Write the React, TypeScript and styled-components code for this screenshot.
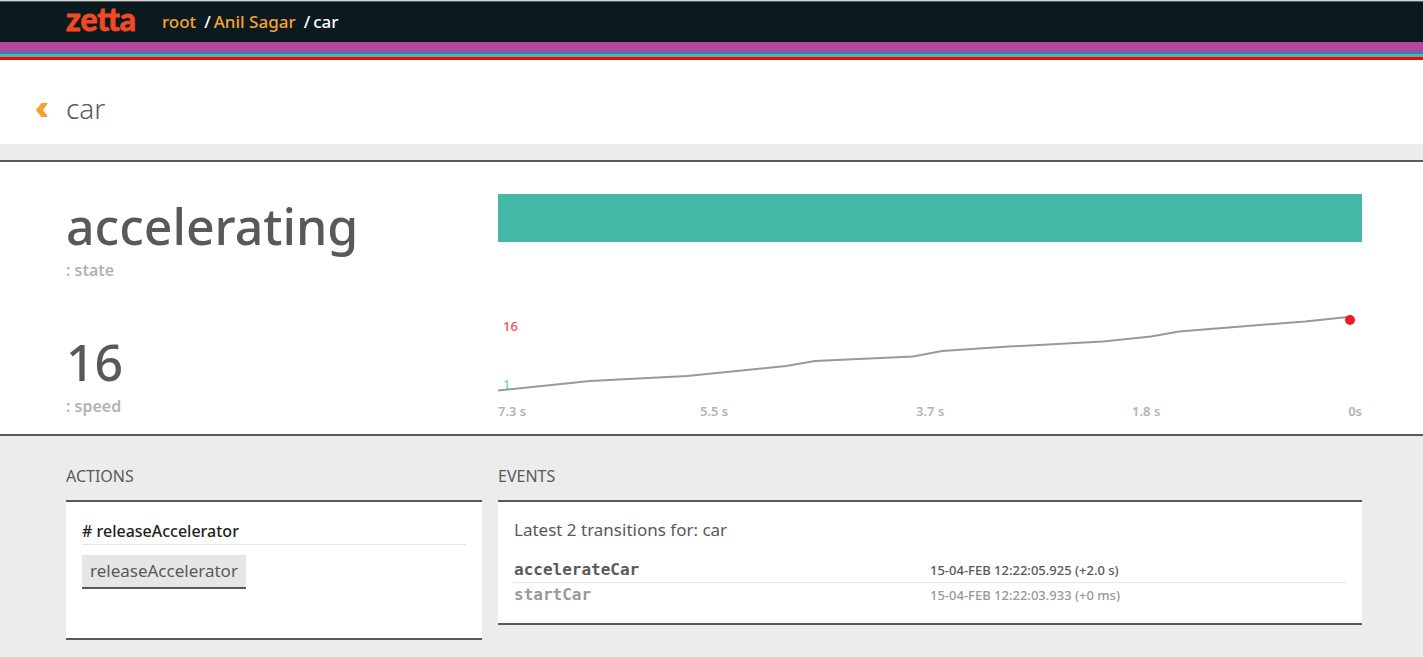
import React from "react";
import styled, { createGlobalStyle } from "styled-components";

const ink = "#58595b";
const muted = "#b3b3b3";
const orange = "#f9a033";
const teal = "#46b8a6";

const GlobalStyle = createGlobalStyle`
  * { box-sizing: border-box; }
  body {
    margin: 0;
    background: #ececec;
    color: ${ink};
    font-family: "Noto Sans", "Open Sans", sans-serif;
    font-size: 16px;
    line-height: 24px;
  }
  h1, h2, h3, p, ol { margin: 0; padding: 0; }
`;

const TopBar = styled.header`
  display: flex;
  align-items: center;
  height: 42px;
  padding: 0 61px 0 66px;
  background: #0b1a1f;
  border-top: 1px solid #d3d7d5;
  box-shadow: inset 0 1px 0 #59625f;
`;

const Logo = styled.a`
  width: 96px;
  padding-bottom: 6px;
  color: #f04923;
  font-family: Lato, sans-serif;
  font-size: 32px;
  font-weight: 700;
  line-height: 32px;
  text-decoration: none;
  -webkit-text-stroke: 1px #f04923;
`;

const Crumbs = styled.ol`
  display: flex;
  gap: 8px;
  list-style: none;
  color: #fff;
  font-size: 17px;
  font-weight: 500;
`;

const Crumb = styled.li`
  display: flex;
  gap: 3px;
`;

const CrumbLink = styled.a`
  color: ${orange};
  text-decoration: none;
`;

const Stripe = styled.div<{ $color: string; $size: number }>`
  height: ${(p) => p.$size}px;
  background: ${(p) => p.$color};
`;

const TitleBar = styled.div`
  display: flex;
  align-items: center;
  height: 84px;
  padding: 12px 61px 0 35px;
  background: #fff;
`;

const BackLink = styled.a`
  display: flex;
  width: 31px;
  padding-top: 3px;
`;

const Title = styled.h1`
  font-size: 28px;
  font-weight: 300;
  line-height: 40px;
`;

const Panel = styled.section`
  margin-top: 16px;
  padding: 0 61px 0 66px;
  background: #fff;
  border-top: 2px solid ${ink};
  border-bottom: 2px solid ${ink};
`;

const Columns = styled.div`
  display: grid;
  grid-template-columns: 1fr 2fr;
`;

const StatRow = styled(Columns)`
  min-height: 136px;
  padding-top: 16px;
`;

const Stat = styled.div`
  display: flex;
  flex-direction: column;
  padding-top: 16px;
`;

const StatValue = styled.div`
  font-size: 50px;
  font-weight: 500;
  line-height: 64px;
`;

const StatLabel = styled.div`
  color: ${muted};
  font-weight: 600;
`;

const StateBar = styled.div`
  height: 48px;
  margin-top: 16px;
  background: ${teal};
`;

const Chart = styled.svg`
  display: block;
  width: 100%;
  font-size: 13px;
  font-weight: 500;
`;

const Axis = styled.div`
  display: flex;
  justify-content: space-between;
  color: ${muted};
  font-size: 13px;
  font-weight: 600;
  line-height: 18px;
`;

const Tick = styled.span`
  flex: 1;
  &:first-child { flex: 0 0 202px; }
  &:last-child { flex: none; }
`;

const Lower = styled.main`
  padding: 28px 61px 16px 66px;
`;

const Column = styled.section<{ $gutter?: boolean }>`
  padding-right: ${(p) => (p.$gutter ? 16 : 0)}px;
`;

const Heading = styled.h2`
  margin-bottom: 12px;
  font-size: 16px;
  font-weight: 400;
`;

const Card = styled.div<{ $bottom: number }>`
  padding: 16px 16px ${(p) => p.$bottom}px;
  background: #fff;
  border-top: 2px solid ${ink};
  border-bottom: 2px solid ${ink};
`;

const ActionName = styled.h3`
  margin-bottom: 10px;
  padding-top: 1px;
  padding-bottom: 1px;
  border-bottom: 1px solid #e6e6e6;
  color: #231f20;
  font-size: 16px;
  font-weight: 500;
`;

const ActionButton = styled.button`
  display: block;
  height: 34px;
  padding: 0 8px;
  background: #e6e6e6;
  border: 0;
  border-bottom: 2px solid ${ink};
  color: ${ink};
  font: inherit;
  font-size: 17px;
`;

const Summary = styled.p`
  margin-bottom: 16px;
  font-size: 17px;
`;

const EventTable = styled.table`
  width: 100%;
  table-layout: fixed;
  border-collapse: collapse;
`;

const EventRow = styled.tr<{ $old?: boolean }>`
  color: ${(p) => (p.$old ? "#999" : ink)};
  & + & { border-top: 1px solid #e6e6e6; }
`;

const EventName = styled.th`
  padding: 0;
  font-family: "DejaVu Sans Mono", monospace;
  font-size: 16px;
  font-weight: 700;
  line-height: 24px;
  text-align: left;
`;

const EventTime = styled.td`
  padding: 0;
  font-size: 13px;
  font-weight: 500;
  line-height: 24px;
`;

const stripes = [
  { color: "#b8459c", size: 9 },
  { color: "#4b6fb8", size: 3 },
  { color: teal, size: 3 },
  { color: "#ff0000", size: 3 },
];

const ticks = ["7.3 s", "5.5 s", "3.7 s", "1.8 s", "0s"];

const events = [
  { name: "accelerateCar", time: "15-04-FEB 12:22:05.925 (+2.0 s)" },
  { name: "startCar", time: "15-04-FEB 12:22:03.933 (+0 ms)" },
];

export default function App() {
  return (
    <>
      <GlobalStyle />
      <TopBar>
        <Logo href="#">zetta</Logo>
        <Crumbs>
          <Crumb><CrumbLink href="#root">root</CrumbLink></Crumb>
          <Crumb><span>/</span><CrumbLink href="#server">Anil Sagar</CrumbLink></Crumb>
          <Crumb><span>/</span><span>car</span></Crumb>
        </Crumbs>
      </TopBar>
      {stripes.map((s) => (
        <Stripe key={s.color} $color={s.color} $size={s.size} />
      ))}
      <TitleBar>
        <BackLink href="#back" aria-label="Back">
          <svg width="13" height="16" viewBox="0 0 13 16" aria-hidden="true">
            <path d="M6.500 1H12.500V2L8 8L12.500 14V15H6.500L0.800 8Z" fill={orange} />
          </svg>
        </BackLink>
        <Title>car</Title>
      </TitleBar>

      <Panel>
        <StatRow>
          <Stat>
            <StatValue>accelerating</StatValue>
            <StatLabel>: state</StatLabel>
          </Stat>
          <StateBar />
        </StatRow>
        <StatRow>
          <Stat>
            <StatValue>16</StatValue>
            <StatLabel>: speed</StatLabel>
          </Stat>
          <div>
            <Chart viewBox="0 16 864 88" role="img" aria-label="Speed over time">
              <text x="5" y="33" fill="#f05054">16</text>
              <text x="5" y="91" fill="#6dcff6">1</text>
              <polyline
                fill="none"
                stroke="#999"
                strokeWidth="2"
                points="0,92.5 92,83 189,78 288,68 317,63 415,58.500 444,53 511,48.500 605,43.500 653,38.500 681,33.500 807,23.500 850,19"
              />
              <circle cx="852" cy="22" r="5" fill="#ed1c24" />
            </Chart>
            <Axis>
              {ticks.map((t) => <Tick key={t}>{t}</Tick>)}
            </Axis>
          </div>
        </StatRow>
      </Panel>

      <Lower>
        <Columns>
          <Column $gutter>
            <Heading>ACTIONS</Heading>
            <Card $bottom={49}>
              <ActionName># releaseAccelerator</ActionName>
              <ActionButton type="button">releaseAccelerator</ActionButton>
            </Card>
          </Column>
          <Column>
            <Heading>EVENTS</Heading>
            <Card $bottom={16}>
              <Summary>Latest 2 transitions for: car</Summary>
              <EventTable>
                <tbody>
                  {events.map((e, i) => (
                    <EventRow key={e.name} $old={i > 0}>
                      <EventName scope="row">{e.name}</EventName>
                      <EventTime>{e.time}</EventTime>
                    </EventRow>
                  ))}
                </tbody>
              </EventTable>
            </Card>
          </Column>
        </Columns>
      </Lower>
    </>
  );
}
